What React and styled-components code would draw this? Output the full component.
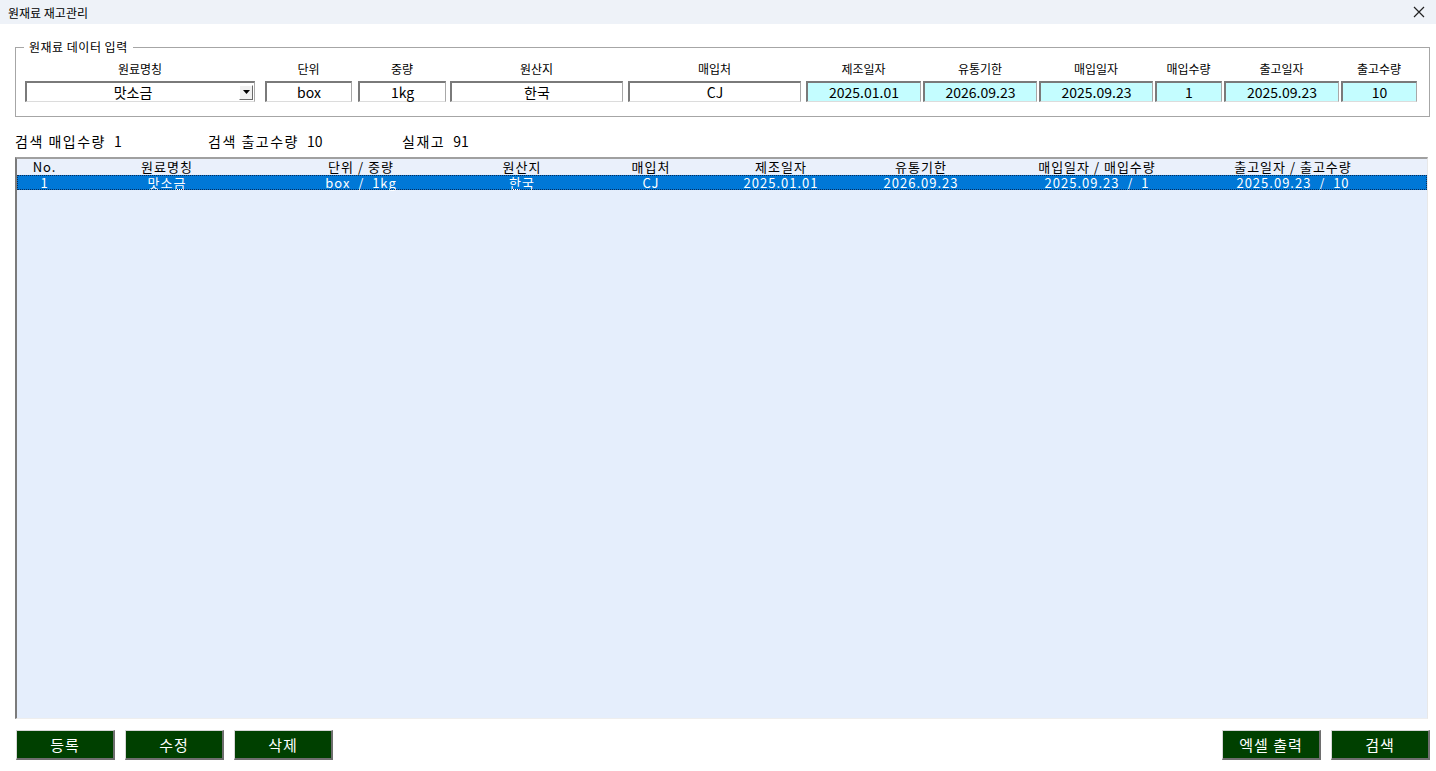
import styled, { createGlobalStyle } from 'styled-components';

const GlobalStyle = createGlobalStyle`
  html, body {
    margin: 0;
    padding: 0;
    background: #ffffff;
    font-family: "Noto Sans CJK KR", "Noto Sans", sans-serif;
    color: #000;
  }
`;

const fields = [
  { label: '원료명칭', value: '맛소금', w: 230, lead: 0, combo: true },
  { label: '단위', value: 'box', w: 87, lead: 10 },
  { label: '중량', value: '1kg', w: 88, lead: 6 },
  { label: '원산지', value: '한국', w: 173, lead: 4 },
  { label: '매입처', value: 'CJ', w: 173, lead: 5 },
  { label: '제조일자', value: '2025.01.01', w: 115, lead: 5, tint: true },
  { label: '유통기한', value: '2026.09.23', w: 114, lead: 2, tint: true },
  { label: '매입일자', value: '2025.09.23', w: 114, lead: 2, tint: true },
  { label: '매입수량', value: '1', w: 67, lead: 2, tint: true },
  { label: '출고일자', value: '2025.09.23', w: 115, lead: 2, tint: true },
  { label: '출고수량', value: '10', w: 76, lead: 2, tint: true },
];

const columns = [
  'No.',
  '원료명칭',
  '단위 / 중량',
  '원산지',
  '매입처',
  '제조일자',
  '유통기한',
  '매입일자 / 매입수량',
  '출고일자 / 출고수량',
  '',
];

const rows = [
  ['1', '맛소금', 'box  /  1kg', '한국', 'CJ', '2025.01.01', '2026.09.23', '2025.09.23  /  1', '2025.09.23  /  10', ''],
];

const Page = styled.div`
  display: flex;
  flex-direction: column;
  height: 100vh;
  box-sizing: border-box;
`;

const TitleBar = styled.div`
  display: flex;
  align-items: center;
  justify-content: space-between;
  height: 24px;
  padding: 0 8px;
  background: #eef2f8;
  font-size: 12px;
  flex-shrink: 0;
`;

const CloseBtn = styled.div`
  display: flex;
  align-items: center;
  justify-content: center;
  width: 16px;
  height: 16px;
  margin-right: 1px;
`;

const Body = styled.div`
  display: flex;
  flex-direction: column;
  flex: 1;
  min-height: 0;
  padding: 0 6px 11px 15px;
`;

const Group = styled.div`
  position: relative;
  margin-top: 23px;
  height: 70px;
  box-sizing: border-box;
  border: 1px solid #a6a6a6;
  padding: 14px 0 0 9px;
  flex-shrink: 0;
`;

const Legend = styled.span`
  position: absolute;
  top: -8px;
  left: 8px;
  padding: 0 5px;
  background: #ffffff;
  font-size: 12px;
  line-height: 14px;
  letter-spacing: 0.5px;
`;

const FieldRow = styled.div`
  display: flex;
  align-items: flex-start;
`;

const Field = styled.div`
  display: flex;
  flex-direction: column;
  width: ${(p) => p.$w}px;
  margin-left: ${(p) => p.$lead}px;
`;

const Label = styled.div`
  height: 14px;
  line-height: 14px;
  font-size: 12px;
  text-align: center;
  margin-bottom: 5px;
`;

const Box = styled.div`
  display: flex;
  align-items: center;
  height: 21px;
  box-sizing: border-box;
  border-style: solid;
  border-width: 2px 1px 1px 2px;
  border-color: #7a7a7a #a8a8a8 #dcdcdc #7a7a7a;
  background: ${(p) => (p.$tint ? '#c4fdff' : '#ffffff')};
  font-size: 14px;
  line-height: 17px;
`;

const BoxText = styled.span`
  flex: 1;
  text-align: center;
  white-space: nowrap;
`;

const ArrowBtn = styled.span`
  display: flex;
  align-items: center;
  justify-content: center;
  width: 14px;
  height: 15px;
  margin-right: 1px;
  box-sizing: border-box;
  background: #f0f0f0;
  border-style: solid;
  border-width: 1px;
  border-color: #ffffff #6a6a6a #6a6a6a #ffffff;
`;

const StatsRow = styled.div`
  display: flex;
  align-items: center;
  height: 14px;
  margin-top: 17px;
  font-size: 14px;
  line-height: 14px;
  flex-shrink: 0;
`;

const Stat = styled.div`
  width: ${(p) => p.$w}px;
  white-space: nowrap;
  letter-spacing: 1.5px;
  span {
    margin-left: 8px;
    letter-spacing: 0;
  }
`;

const List = styled.div`
  flex: 1;
  min-height: 0;
  margin-top: 9px;
  margin-right: 2px;
  box-sizing: border-box;
  border-style: solid;
  border-width: 2px 1px 1px 2px;
  border-color: #a0a0a0 #e8e8e8 #eeeeee #7b7b7b;
  background: #e5eefc;
  overflow: hidden;
`;

const GridRow = styled.div`
  display: grid;
  grid-template-columns: 55px 190px 198px 124px 134px 126px 154px 198px 194px 1fr;
  height: 15px;
  margin-bottom: ${(p) => (p.$head ? 1 : 0)}px;
  font-size: 13px;
  letter-spacing: 1px;
  line-height: 15px;
  white-space: pre;
  background: ${(p) => (p.$selected ? '#0078d7' : p.$head ? '#eaf0fb' : 'transparent')};
  color: ${(p) => (p.$selected ? '#ffffff' : '#000000')};
  outline: ${(p) => (p.$selected ? '1px dotted #0c2b55' : 'none')};
  outline-offset: -1px;
`;

const Cell = styled.div`
  text-align: center;
`;

const ButtonRow = styled.div`
  display: flex;
  align-items: center;
  margin-top: 11px;
  gap: 10px;
  flex-shrink: 0;
`;

const Spacer = styled.div`
  flex: 1;
`;

const Btn = styled.button`
  width: 99px;
  height: 30px;
  margin-left: ${(p) => p.$lead || 0}px;
  box-sizing: border-box;
  background: #004000;
  color: #ffffff;
  font-family: "Noto Sans CJK KR", "Noto Sans", sans-serif;
  font-size: 15px;
  letter-spacing: 1px;
  border-style: solid;
  border-width: 1px 2px 2px 1px;
  border-color: #d6d6d6 #6e6e6e #6e6e6e #d6d6d6;
  padding: 0;
  cursor: pointer;
`;

const CloseIcon = () => (
  <svg width="12" height="12" viewBox="0 0 12 12">
    <path d="M1 1 L11 11 M11 1 L1 11" stroke="#222" strokeWidth="1.2" />
  </svg>
);

const DownTri = () => (
  <svg width="7" height="4" viewBox="0 0 7 4">
    <path d="M0 0 H7 L3.5 4 Z" fill="#000" />
  </svg>
);

const App = () => (
  <>
    <GlobalStyle />
    <Page>
      <TitleBar>
        <span>원재료 재고관리</span>
        <CloseBtn>
          <CloseIcon />
        </CloseBtn>
      </TitleBar>
      <Body>
        <Group>
          <Legend>원재료 데이터 입력</Legend>
          <FieldRow>
            {fields.map((f) => (
              <Field key={f.label} $w={f.w} $lead={f.lead}>
                <Label>{f.label}</Label>
                <Box $tint={f.tint}>
                  <BoxText>{f.value}</BoxText>
                  {f.combo && (
                    <ArrowBtn>
                      <DownTri />
                    </ArrowBtn>
                  )}
                </Box>
              </Field>
            ))}
          </FieldRow>
        </Group>
        <StatsRow>
          <Stat $w={193}>
            검색 매입수량<span>1</span>
          </Stat>
          <Stat $w={194}>
            검색 출고수량<span>10</span>
          </Stat>
          <Stat $w={120}>
            실재고<span>91</span>
          </Stat>
        </StatsRow>
        <List>
          <GridRow $head>
            {columns.map((c, i) => (
              <Cell key={i}>{c}</Cell>
            ))}
          </GridRow>
          {rows.map((r, i) => (
            <GridRow key={i} $selected>
              {r.map((v, j) => (
                <Cell key={j}>{v}</Cell>
              ))}
            </GridRow>
          ))}
        </List>
        <ButtonRow>
          <Btn $lead={1}>등록</Btn>
          <Btn>수정</Btn>
          <Btn>삭제</Btn>
          <Spacer />
          <Btn>엑셀 출력</Btn>
          <Btn>검색</Btn>
        </ButtonRow>
      </Body>
    </Page>
  </>
);

export default App;
